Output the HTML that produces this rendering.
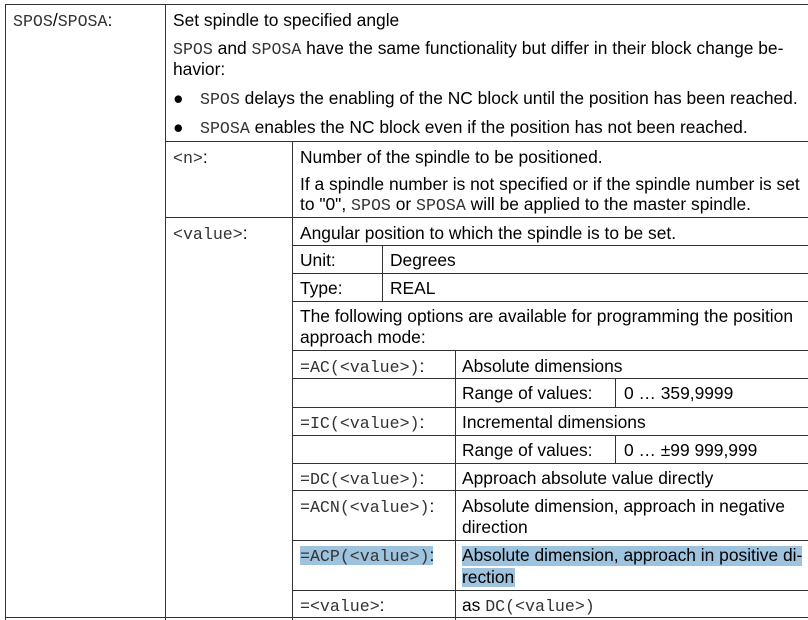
<!DOCTYPE html>
<html><head><meta charset="utf-8"><style>
body{margin:0;width:808px;height:620px;background:#fff;position:relative;overflow:hidden;font-family:"Liberation Sans",sans-serif;font-size:17.4px;color:#000}
.h{position:absolute;height:1px;background:#333}
.v{position:absolute;width:1px;background:#333}
.t{position:absolute;height:20px;line-height:20px;white-space:nowrap}
.m{font-family:"Liberation Mono",monospace;font-size:16.6px;color:#333}
.hl{position:absolute;background:#9ec3df}
</style></head><body>
<div class="hl" style="left:300px;top:546px;width:133px;height:19px"></div>
<div class="hl" style="left:462px;top:546px;width:340px;height:20px"></div>
<div class="hl" style="left:462px;top:568px;width:53px;height:19px"></div>

<div class="h" style="left:5px;top:4px;width:803px"></div>
<div class="h" style="left:165px;top:141px;width:643px"></div>
<div class="h" style="left:165px;top:217px;width:643px"></div>
<div class="h" style="left:292px;top:245px;width:516px"></div>
<div class="h" style="left:292px;top:273px;width:516px"></div>
<div class="h" style="left:292px;top:301px;width:516px"></div>
<div class="h" style="left:292px;top:350px;width:516px"></div>
<div class="h" style="left:292px;top:378px;width:516px"></div>
<div class="h" style="left:292px;top:407px;width:516px"></div>
<div class="h" style="left:292px;top:435px;width:516px"></div>
<div class="h" style="left:292px;top:463px;width:516px"></div>
<div class="h" style="left:292px;top:490px;width:516px"></div>
<div class="h" style="left:292px;top:540px;width:516px"></div>
<div class="h" style="left:292px;top:590px;width:516px"></div>
<div class="h" style="left:5px;top:617px;width:803px"></div>

<div class="v" style="left:5px;top:4px;height:616px"></div>
<div class="v" style="left:165px;top:4px;height:616px"></div>
<div class="v" style="left:292px;top:141px;height:479px"></div>
<div class="v" style="left:382px;top:245px;height:56px"></div>
<div class="v" style="left:455px;top:350px;height:270px"></div>
<div class="v" style="left:615px;top:378px;height:29px"></div>
<div class="v" style="left:615px;top:435px;height:28px"></div>

<div class="t" style="left:13px;top:10px"><span class="m">SPOS</span>/<span class="m">SPOSA</span>:</div>
<div class="t" style="left:173px;top:10px">Set spindle to specified angle</div>
<div class="t" style="left:173px;top:38px"><span class="m">SPOS</span> and <span class="m">SPOSA</span> have the same functionality but differ in their block change be-</div>
<div class="t" style="left:173px;top:59px">havior:</div>
<div class="t" style="left:173px;top:88px">●</div>
<div class="t" style="left:200px;top:88px"><span class="m">SPOS</span> delays the enabling of the NC block until the position has been reached.</div>
<div class="t" style="left:173px;top:117px">●</div>
<div class="t" style="left:200px;top:117px"><span class="m">SPOSA</span> enables the NC block even if the position has not been reached.</div>

<div class="t" style="left:173px;top:147px"><span class="m">&lt;n&gt;</span>:</div>
<div class="t" style="left:300px;top:147px">Number of the spindle to be positioned.</div>
<div class="t" style="left:300px;top:174px">If a spindle number is not specified or if the spindle number is set</div>
<div class="t" style="left:300px;top:194px">to "0", <span class="m">SPOS</span> or <span class="m">SPOSA</span> will be applied to the master spindle.</div>

<div class="t" style="left:173px;top:223px"><span class="m">&lt;value&gt;</span>:</div>
<div class="t" style="left:300px;top:223px">Angular position to which the spindle is to be set.</div>
<div class="t" style="left:300px;top:250px">Unit:</div>
<div class="t" style="left:390px;top:250px">Degrees</div>
<div class="t" style="left:300px;top:278px">Type:</div>
<div class="t" style="left:390px;top:278px">REAL</div>
<div class="t" style="left:300px;top:306px">The following options are available for programming the position</div>
<div class="t" style="left:300px;top:327px">approach mode:</div>

<div class="t" style="left:300px;top:356px"><span class="m">=AC(&lt;value&gt;)</span>:</div>
<div class="t" style="left:462px;top:356px">Absolute dimensions</div>
<div class="t" style="left:462px;top:383px">Range of values:</div>
<div class="t" style="left:624px;top:383px">0 … 359,9999</div>
<div class="t" style="left:300px;top:412px"><span class="m">=IC(&lt;value&gt;)</span>:</div>
<div class="t" style="left:462px;top:412px">Incremental dimensions</div>
<div class="t" style="left:462px;top:440px">Range of values:</div>
<div class="t" style="left:624px;top:440px">0 … ±99 999,999</div>
<div class="t" style="left:300px;top:468px"><span class="m">=DC(&lt;value&gt;)</span>:</div>
<div class="t" style="left:462px;top:468px">Approach absolute value directly</div>
<div class="t" style="left:300px;top:496px"><span class="m">=ACN(&lt;value&gt;)</span>:</div>
<div class="t" style="left:462px;top:496px">Absolute dimension, approach in negative</div>
<div class="t" style="left:462px;top:517px">direction</div>
<div class="t" style="left:300px;top:545px"><span class="m">=ACP(&lt;value&gt;)</span>:</div>
<div class="t" style="left:462px;top:545px">Absolute dimension, approach in positive di-</div>
<div class="t" style="left:462px;top:567px">rection</div>
<div class="t" style="left:300px;top:595px"><span class="m">=&lt;value&gt;</span>:</div>
<div class="t" style="left:462px;top:595px">as <span class="m">DC(&lt;value&gt;)</span></div>
</body></html>
